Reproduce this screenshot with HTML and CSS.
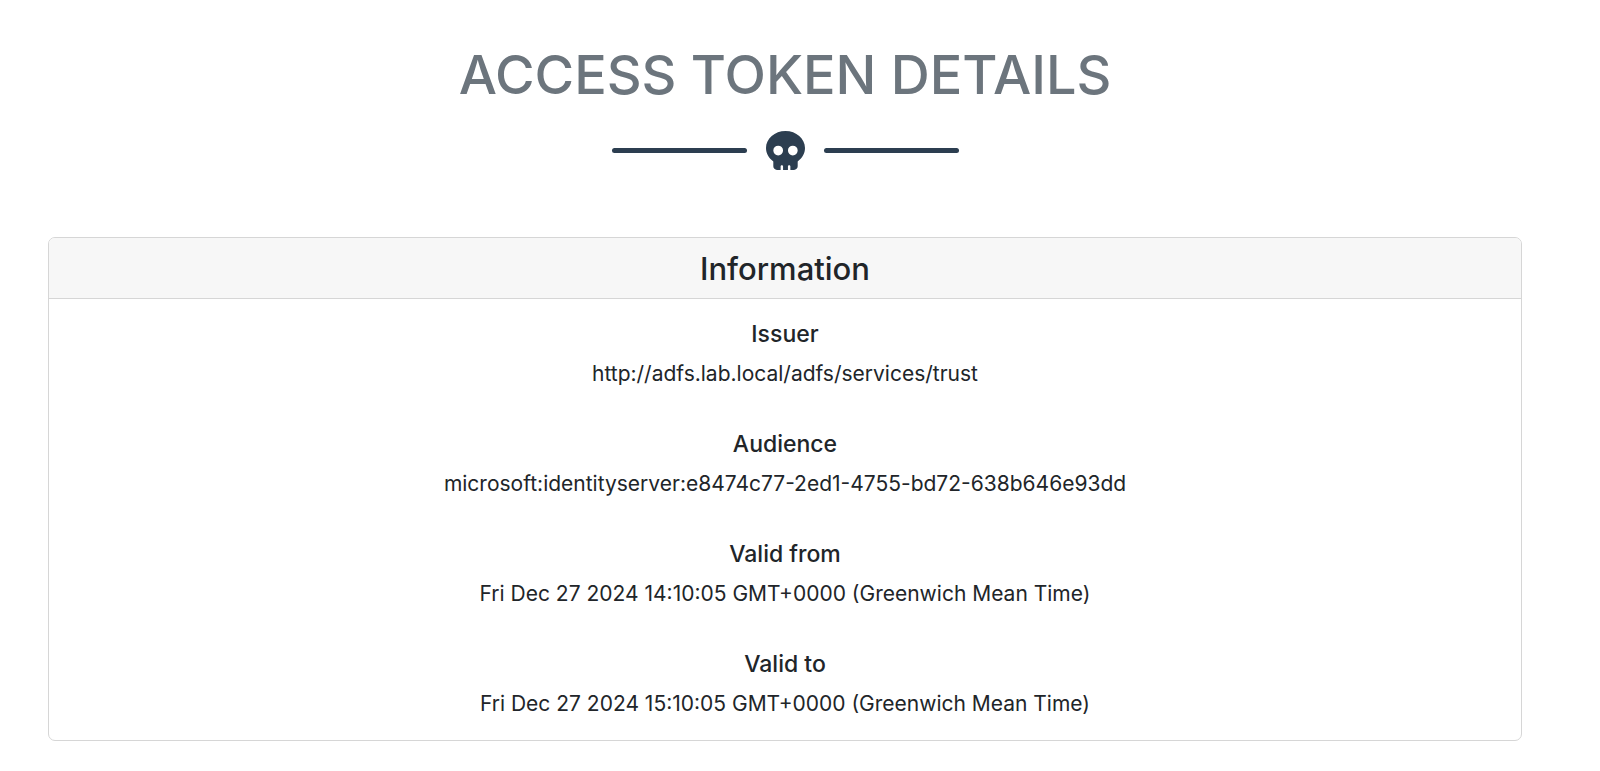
FILE: index.html
```html
<!DOCTYPE html>
<html lang="en">
<head>
    <meta charset="UTF-8">
    <meta name="viewport" content="width=device-width, initial-scale=1.0">
    <title>Access Token Details</title>
    <link rel="stylesheet" href="styles.css">
</head>
<body>
    <main class="container">
        <h1 class="page-title">Access Token Details</h1>

        <div class="divider">
            <div class="divider-line"></div>
            <svg class="divider-icon" viewBox="0 0 512 512" aria-hidden="true">
                <path d="M416 398.9c58.5-41.1 96-104.1 96-174.9C512 100.3 397.4 0 256 0S0 100.3 0 224c0 70.7 37.5 133.8 96 174.9c0 .4 0 .7 0 1.1v64c0 26.5 21.5 48 48 48h48V464c0-8.8 7.2-16 16-16s16 7.2 16 16v48h64V464c0-8.8 7.2-16 16-16s16 7.2 16 16v48h48c26.5 0 48-21.5 48-48V400c0-.4 0-.7 0-1.1zM96 256a64 64 0 1 1 128 0A64 64 0 1 1 96 256zm256-64a64 64 0 1 1 0 128 64 64 0 1 1 0-128z"/>
            </svg>
            <div class="divider-line"></div>
        </div>

        <section class="card">
            <h2 class="card-header">Information</h2>
            <dl class="card-body">
                <div class="item">
                    <dt>Issuer</dt>
                    <dd>http://adfs.lab.local/adfs/services/trust</dd>
                </div>
                <div class="item">
                    <dt>Audience</dt>
                    <dd>microsoft:identityserver:e8474c77-2ed1-4755-bd72-638b646e93dd</dd>
                </div>
                <div class="item">
                    <dt>Valid from</dt>
                    <dd>Fri Dec 27 2024 14:10:05 GMT+0000 (Greenwich Mean Time)</dd>
                </div>
                <div class="item">
                    <dt>Valid to</dt>
                    <dd>Fri Dec 27 2024 15:10:05 GMT+0000 (Greenwich Mean Time)</dd>
                </div>
            </dl>
        </section>
    </main>
</body>
</html>
```
FILE: styles.css
```css
* {
    box-sizing: border-box;
}
body {
    margin: 0;
    font-family: Inter, "Liberation Sans", sans-serif;
    background-color: #fff;
    color: #212529;
}
.container {
    padding: 41px 78px 28px 48px;
    text-align: center;
}
.page-title {
    margin: 0;
    font-size: 54px;
    font-weight: 500;
    line-height: 68px;
    text-transform: uppercase;
    color: #6c757d;
}
.divider {
    display: flex;
    justify-content: center;
    align-items: center;
    gap: 19px;
    margin: 22px 0 67px;
}
.divider-line {
    width: 135px;
    height: 5px;
    border-radius: 5px;
    background-color: #2c3e50;
}
.divider-icon {
    width: 39px;
    height: 39px;
    fill: #2c3e50;
}
.card {
    border: 1px solid #d6d6d6;
    border-radius: 7px;
    overflow: hidden;
}
.card-header {
    margin: 0;
    padding: 11px 20px 9px;
    font-size: 31px;
    font-weight: 500;
    line-height: 40px;
    background-color: #f7f7f7;
    border-bottom: 1px solid #d6d6d6;
}
.card-body {
    display: grid;
    gap: 38px;
    margin: 0;
    padding: 21px 20px 18px;
    overflow-wrap: anywhere;
}
dt {
    margin-bottom: 8px;
    font-size: 23px;
    font-weight: 500;
    line-height: 28px;
}
dd {
    margin: 0;
    font-size: 21px;
    line-height: 36px;
}
```
